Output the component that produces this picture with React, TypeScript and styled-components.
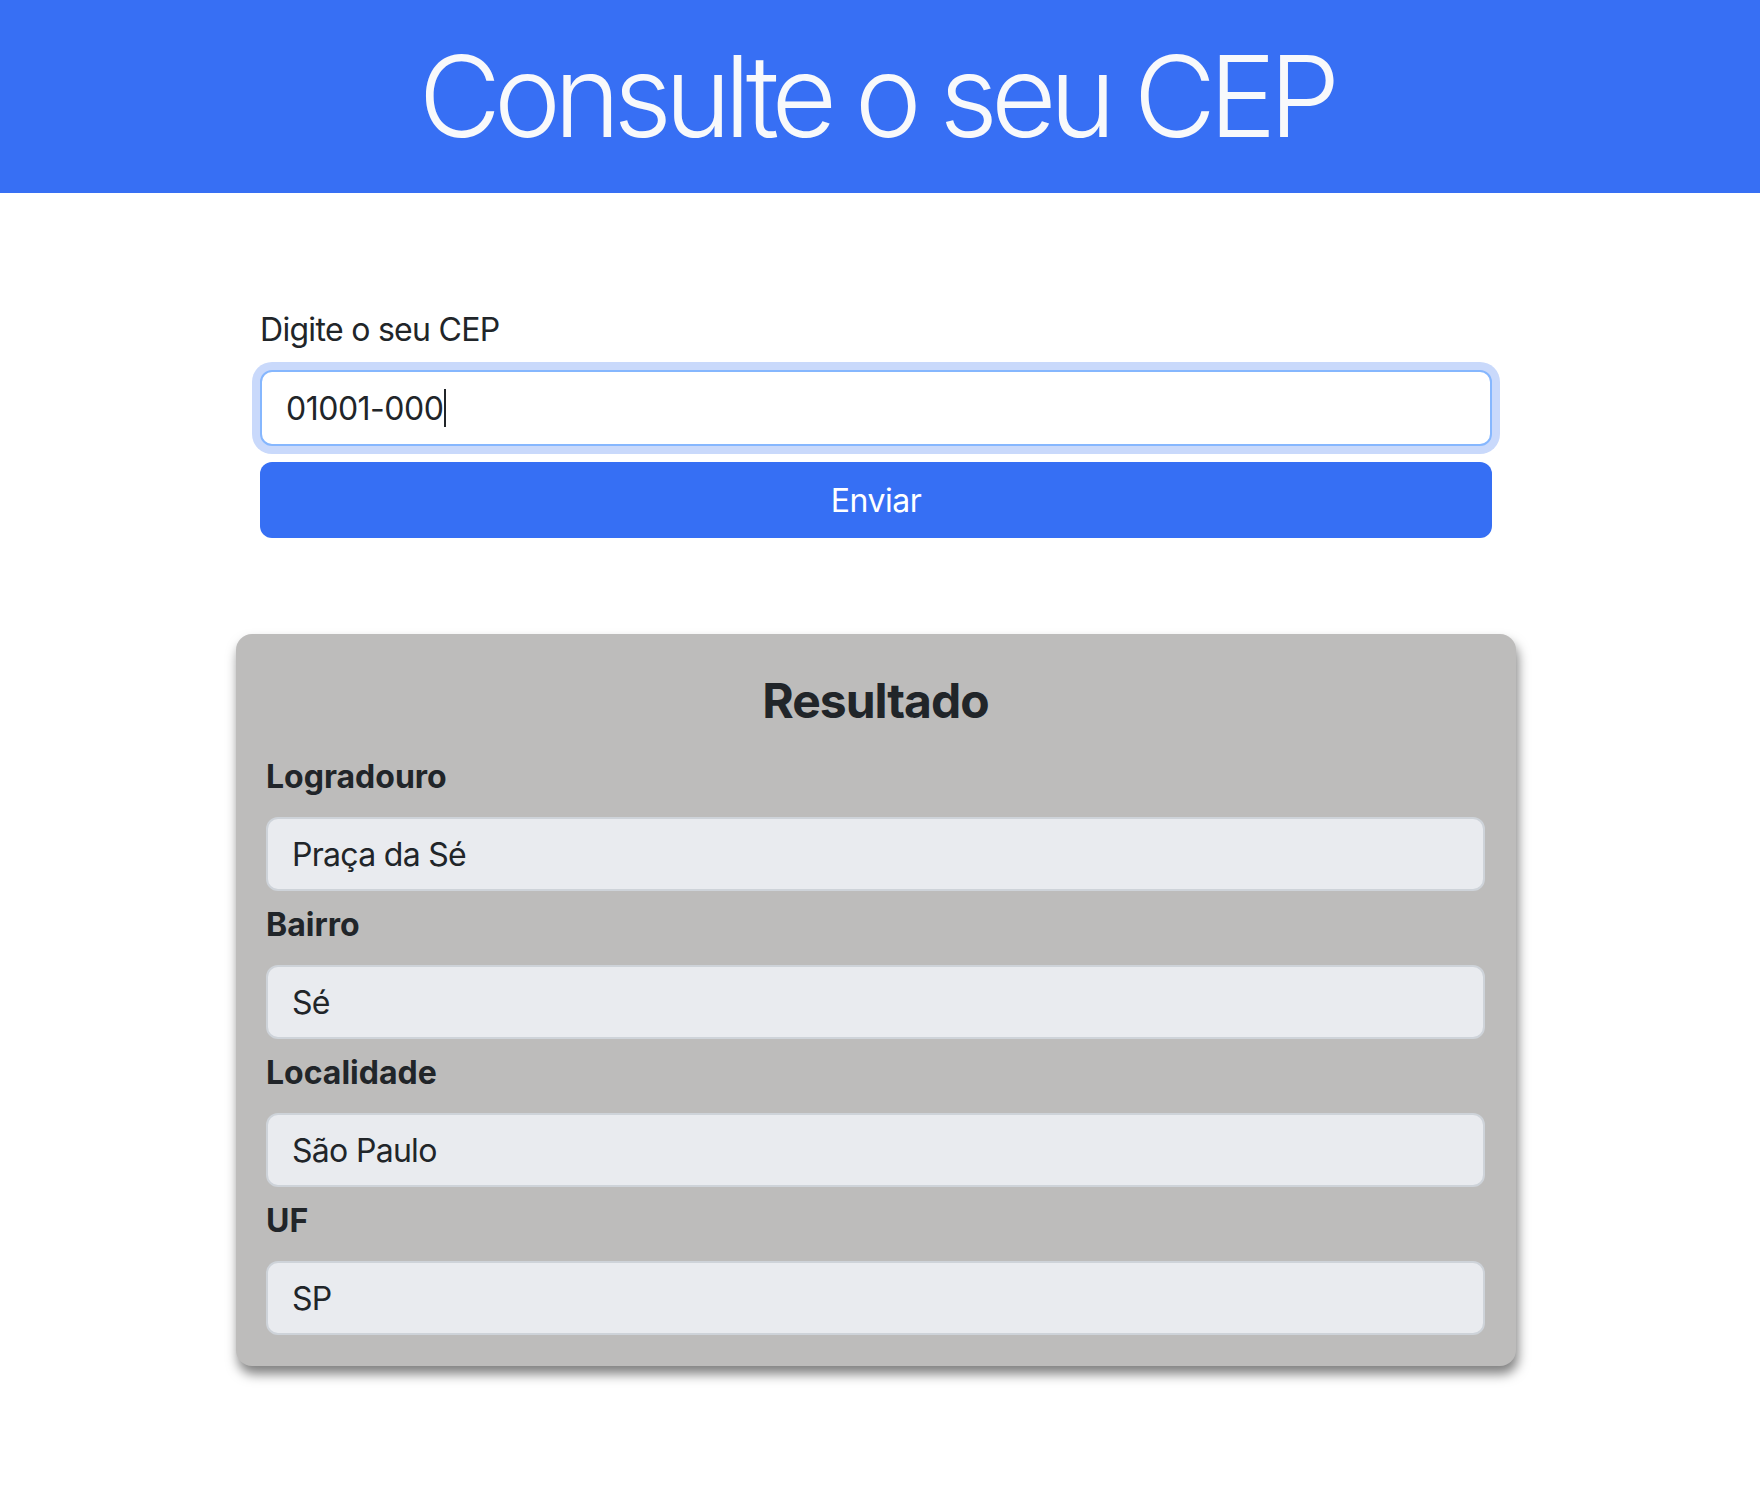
import React from "react";
import styled, { createGlobalStyle } from "styled-components";

const Global = createGlobalStyle`
  html, body { margin: 0; padding: 0; background: #ffffff; }
  body { font-family: Inter, "Noto Sans", "Liberation Sans", sans-serif; color: #212529; }
  * { box-sizing: border-box; }
`;

const Header = styled.header`
  height: 193px;
  background: #376ff4;
  display: flex;
  align-items: center;
  justify-content: center;
  padding-right: 8px;
`;

const Title = styled.h1`
  margin: 0;
  font-size: 113px;
  font-weight: 300;
  line-height: 1.2;
  color: #f8f9fb;
  letter-spacing: -7px;
`;

const Page = styled.main`
  padding: 113px 8px 120px 0;
`;

const Form = styled.form`
  width: 1232px;
  margin: 0 auto;
  display: flex;
  flex-direction: column;
`;

const FormLabel = styled.label`
  font-size: 32px;
  line-height: 48px;
  margin-bottom: 16px;
  letter-spacing: -0.7px;
`;

const CepInput = styled.div`
  height: 76px;
  border: 2px solid #86b7fe;
  border-radius: 12px;
  box-shadow: 0 0 0 8px #c9d9fb;
  display: flex;
  align-items: center;
  padding: 0 24px;
  font-size: 32px;
  letter-spacing: -0.5px;
  background: #fff;
`;

const Caret = styled.span`
  display: inline-block;
  width: 2px;
  height: 38px;
  background: #212529;
  margin-left: 1px;
`;

const SubmitButton = styled.button`
  margin-top: 16px;
  height: 76px;
  border: none;
  border-radius: 12px;
  background: #366ff4;
  color: #ffffff;
  font-family: inherit;
  font-size: 32px;
  letter-spacing: -0.5px;
  cursor: pointer;
`;

const Card = styled.section`
  width: 1280px;
  margin: 96px auto 0;
  background: #bdbcbb;
  border-radius: 16px;
  box-shadow: 2px 8px 12px rgba(0, 0, 0, 0.5);
  padding: 38px 31px 31px 30px;
  display: flex;
  flex-direction: column;
`;

const CardTitle = styled.h2`
  margin: 0 0 23px;
  text-align: center;
  font-size: 48px;
  line-height: 58px;
  font-weight: 700;
  letter-spacing: -1px;
  color: #212529;
`;

const Field = styled.div<{ $first?: boolean }>`
  display: flex;
  flex-direction: column;
  margin-top: ${(p) => (p.$first ? "0" : "10px")};
`;

const FieldLabel = styled.span`
  font-size: 32px;
  line-height: 48px;
  font-weight: 700;
  margin-bottom: 16px;
  color: #212529;
`;

const FieldValue = styled.div`
  height: 74px;
  background: #e9ebef;
  border: 2px solid #ced3d9;
  border-radius: 12px;
  display: flex;
  align-items: center;
  padding: 0 24px;
  font-size: 32px;
  letter-spacing: -0.7px;
  color: #212529;
`;

const results = [
  { label: "Logradouro", value: "Praça da Sé" },
  { label: "Bairro", value: "Sé" },
  { label: "Localidade", value: "São Paulo" },
  { label: "UF", value: "SP" },
];

export default function App() {
  return (
    <>
      <Global />
      <Header>
        <Title>Consulte o seu CEP</Title>
      </Header>
      <Page>
        <Form onSubmit={(e) => e.preventDefault()}>
          <FormLabel>Digite o seu CEP</FormLabel>
          <CepInput>
            01001-000
            <Caret />
          </CepInput>
          <SubmitButton type="submit">Enviar</SubmitButton>
        </Form>
        <Card>
          <CardTitle>Resultado</CardTitle>
          {results.map((r, i) => (
            <Field key={r.label} $first={i === 0}>
              <FieldLabel>{r.label}</FieldLabel>
              <FieldValue>{r.value}</FieldValue>
            </Field>
          ))}
        </Card>
      </Page>
    </>
  );
}
